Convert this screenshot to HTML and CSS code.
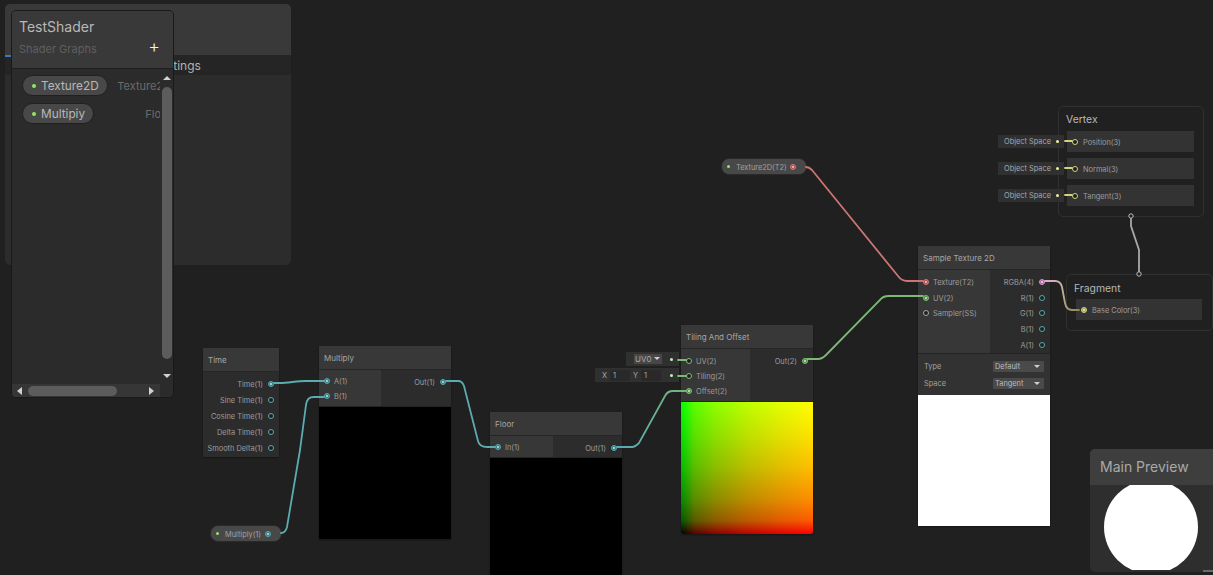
FILE: index.html
```html
<!DOCTYPE html>
<html lang="en">
<head>
<meta charset="utf-8">
<title>TestShader</title>
<link rel="stylesheet" href="styles.css">
</head>
<body>
<main class="canvas">

  <section class="inspector">
    <div class="inspector-head"></div>
    <div class="inspector-tabs"><span class="tab-marker"></span><span class="tab-label">Node Settings</span></div>
  </section>

  <section class="blackboard">
    <header class="bb-head">
      <h1 class="bb-title">TestShader</h1>
      <div class="bb-sub"><span>Shader Graphs</span><span class="bb-add">+</span></div>
    </header>
    <div class="bb-body">
      <div class="bb-list">
        <div class="bb-row"><span class="pill"><i class="dot"></i>Texture2D</span><span class="bb-type">Texture2D</span></div>
        <div class="bb-row"><span class="pill"><i class="dot"></i>Multipiy</span><span class="bb-type">Float</span></div>
      </div>
      <div class="vscroll">
        <span class="arrow-up"></span>
        <span class="vthumb"></span>
        <span class="arrow-down"></span>
      </div>
      <div class="hscroll">
        <span class="arrow-left"></span>
        <span class="hthumb"></span>
        <span class="arrow-right"></span>
      </div>
      <div class="corner"></div>
    </div>
  </section>

  <article class="node n-time">
    <header class="node-head">Time</header>
    <div class="out-only">
      <div class="port out"><span>Time(1)</span><i class="pin teal on"></i></div>
      <div class="port out"><span>Sine Time(1)</span><i class="pin teal"></i></div>
      <div class="port out"><span>Cosine Time(1)</span><i class="pin teal"></i></div>
      <div class="port out"><span>Delta Time(1)</span><i class="pin teal"></i></div>
      <div class="port out"><span>Smooth Delta(1)</span><i class="pin teal"></i></div>
    </div>
  </article>

  <article class="node n-multiply">
    <header class="node-head">Multiply</header>
    <div class="ports">
      <div class="inputs">
        <div class="port"><i class="pin teal on"></i><span>A(1)</span></div>
        <div class="port"><i class="pin teal on"></i><span>B(1)</span></div>
      </div>
      <div class="outputs">
        <div class="port out"><span>Out(1)</span><i class="pin teal on"></i></div>
      </div>
    </div>
    <div class="preview black"></div>
  </article>

  <article class="node n-floor">
    <header class="node-head">Floor</header>
    <div class="ports">
      <div class="inputs">
        <div class="port"><i class="pin teal on"></i><span>In(1)</span></div>
      </div>
      <div class="outputs">
        <div class="port out"><span>Out(1)</span><i class="pin teal on"></i></div>
      </div>
    </div>
    <div class="preview black"></div>
  </article>

  <article class="node n-tiling">
    <header class="node-head">Tiling And Offset</header>
    <div class="ports">
      <div class="inputs">
        <div class="port"><i class="pin green"></i><span>UV(2)</span></div>
        <div class="port"><i class="pin green"></i><span>Tiling(2)</span></div>
        <div class="port"><i class="pin green on"></i><span>Offset(2)</span></div>
      </div>
      <div class="outputs">
        <div class="port out"><span>Out(2)</span><i class="pin green on"></i></div>
      </div>
    </div>
    <div class="preview uv"></div>
  </article>

  <article class="node n-sample">
    <header class="node-head">Sample Texture 2D</header>
    <div class="ports">
      <div class="inputs">
        <div class="port"><i class="pin red on"></i><span>Texture(T2)</span></div>
        <div class="port"><i class="pin green on"></i><span>UV(2)</span></div>
        <div class="port"><i class="pin grey"></i><span>Sampler(SS)</span></div>
      </div>
      <div class="outputs">
        <div class="port out"><span>RGBA(4)</span><i class="pin pink on"></i></div>
        <div class="port out"><span>R(1)</span><i class="pin teal"></i></div>
        <div class="port out"><span>G(1)</span><i class="pin teal"></i></div>
        <div class="port out"><span>B(1)</span><i class="pin teal"></i></div>
        <div class="port out"><span>A(1)</span><i class="pin teal"></i></div>
      </div>
    </div>
    <div class="controls">
      <div class="control"><span>Type</span><span class="select">Default</span></div>
      <div class="control"><span>Space</span><span class="select">Tangent</span></div>
    </div>
    <div class="preview white"></div>
  </article>

  <article class="context n-vertex">
    <h2 class="context-title">Vertex</h2>
    <div class="block"><i class="pin yellow"></i><span>Position(3)</span></div>
    <div class="block"><i class="pin yellow"></i><span>Normal(3)</span></div>
    <div class="block"><i class="pin yellow"></i><span>Tangent(3)</span></div>
  </article>

  <article class="context n-fragment">
    <h2 class="context-title">Fragment</h2>
    <div class="block"><i class="pin yellow on"></i><span>Base Color(3)</span></div>
  </article>

  <div class="prop p-texture"><i class="prop-dot"></i><span>Texture2D(T2)</span><i class="pin red on"></i></div>
  <div class="prop p-multiply"><i class="prop-dot"></i><span>Multiply(1)</span><i class="pin teal on"></i></div>

  <div class="inline i-uv"><span class="dropdown">UV0</span><i class="inline-dot green-dot"></i></div>
  <div class="inline i-tiling">
    <span class="axis">X</span><span class="num">1</span><span class="axis">Y</span><span class="num">1</span><i class="inline-dot green-dot"></i>
  </div>
  <div class="inline i-space i-pos"><span>Object Space</span><i class="inline-dot yellow-dot"></i></div>
  <div class="inline i-space i-nor"><span>Object Space</span><i class="inline-dot yellow-dot"></i></div>
  <div class="inline i-space i-tan"><span>Object Space</span><i class="inline-dot yellow-dot"></i></div>

  <aside class="main-preview">
    <header class="mp-head">Main Preview</header>
    <div class="mp-body"><div class="sphere"></div></div>
    <span class="mp-grip"></span>
  </aside>

  <svg class="wires" width="1213" height="575" viewBox="0 0 1213 575" aria-hidden="true">
    <defs>
      <linearGradient id="wire-offset" gradientUnits="userSpaceOnUse" x1="617" y1="447" x2="686" y2="391">
        <stop offset="0" stop-color="#5aabb2"/><stop offset="1" stop-color="#74b47a"/>
      </linearGradient>
      <linearGradient id="wire-base" gradientUnits="userSpaceOnUse" x1="1045" y1="281" x2="1079" y2="310">
        <stop offset="0" stop-color="#dcaccd"/><stop offset="0.55" stop-color="#bcae88"/><stop offset="1" stop-color="#8d8c58"/>
      </linearGradient>
    </defs>
    <g fill="none" stroke-width="1.8" stroke-linecap="round">
      <path stroke="#5aabb2" d="M274 383H280C288 383 297 381 305 381H324"/>
      <path stroke="#5aabb2" d="M281 533C284 533 286 531 287 527L300 450L306 405C307 399 309 397 314 397H324"/>
      <path stroke="#5aabb2" d="M446 381H458C462 381 463 383 464 386L478 441C479 445 482 447 487 447H495"/>
      <path stroke="url(#wire-offset)" d="M617 447H632C635 447 637 445 639 443L665 396C667 392 669 391 673 391H686"/>
      <path stroke="#7cb975" d="M807 359H818C821 359 823 358 826 355L880 300C882 297 885 296 889 296H923"/>
      <path stroke="#cb7572" d="M806 167C808 167 810 168 812 170L898 276C901 280 903 281 907 281H923"/>
      <path stroke="#7cb975" d="M678 360H686M678 376H686"/>
      <path stroke="#cfd47f" d="M1065 141H1072M1065 168H1072M1065 195H1072"/>
      <path stroke="url(#wire-base)" d="M1045 281H1055C1059 281 1061 283 1062 287L1065 303C1066 308 1068 310 1072 310H1079"/>
      <path stroke="#a8a8a8" d="M1131 219V226L1139 250V272"/>
    </g>
    <g fill="#1f1f1f" stroke="#bcbcbc">
      <circle cx="1131" cy="216" r="2.2"/>
      <circle cx="1139" cy="274" r="2.2"/>
    </g>
  </svg>
</main>
</body>
</html>
```
FILE: styles.css
```css
* { box-sizing: border-box; }
html, body { margin: 0; height: 100%; }
body {
  background: #202020;
  font-family: Inter, "Noto Sans", sans-serif;
  overflow: hidden;
}
.canvas { position: relative; width: 1213px; height: 575px; overflow: hidden; }

/* Back inspector */
.inspector {
  position: absolute; left: 5px; top: 4px; width: 286px; height: 261px;
  background: #2c2c2c; border-radius: 5px; overflow: hidden;
}
.inspector-head { height: 51px; background: #393939; }
.inspector-tabs { position: relative; height: 20px; background: #252525; }
.tab-marker { position: absolute; left: 0; top: 0; width: 8px; height: 2px; background: #3a79bb; }
.tab-label { position: absolute; left: 116px; top: 3px; font-size: 12px; color: #b2b2b2; white-space: nowrap; }

/* Blackboard */
.blackboard {
  position: absolute; left: 11px; top: 10px; width: 163px; height: 388px;
  background: #2b2b2b; border: 1px solid #191919; border-radius: 5px; overflow: hidden;
  display: flex; flex-direction: column;
}
.bb-head { height: 58px; background: #393939; border-bottom: 1px solid #1e1e1e; padding: 7px 7px 0; flex: none; }
.bb-title { margin: 0; font-size: 14px; line-height: 18px; font-weight: 400; color: #b8b8b8; }
.bb-sub { display: flex; justify-content: space-between; align-items: center; margin-top: 6px; font-size: 11px; color: #5f5f5f; height: 14px; }
.bb-add { color: #f0f0f0; font-size: 18px; line-height: 14px; margin-right: 6px; font-weight: 300; margin-top: -4px; }
.bb-body { flex: 1; display: grid; grid-template-columns: 1fr 13px; grid-template-rows: 1fr 13px; min-height: 0; }
.bb-list { padding: 6px 0 0 10px; overflow: hidden; display: flex; flex-direction: column; gap: 7px; }
.bb-row { display: flex; justify-content: space-between; align-items: center; white-space: nowrap; height: 21px; width: 149px; }
.pill {
  display: flex; align-items: center; height: 21px; padding: 0 8px 0 9px;
  background: #484848; border: 1px solid #202020; border-radius: 11px;
  font-size: 11.8px; color: #b8b8b8;
}
.dot { width: 4px; height: 4px; border-radius: 50%; background: #8fe85e; margin-right: 5px; }
.bb-type { font-size: 11px; color: #6c6c6c; }
.vscroll { background: #2b2b2b; display: flex; flex-direction: column; align-items: center; padding: 7px 0 6px; }
.vthumb { width: 10px; height: 272px; margin-top: 7px; border-radius: 5px; background: #5c5c5c; }
.arrow-up { width: 0; height: 0; border: 4px solid transparent; border-top: 0; border-bottom: 4px solid #d2d2d2; }
.arrow-down { width: 0; height: 0; margin-top: auto; border: 4px solid transparent; border-bottom: 0; border-top: 4px solid #d2d2d2; }
.hscroll { background: #363636; display: flex; align-items: center; padding: 0 6px 0 5px; }
.hthumb { width: 89px; height: 10px; margin-left: 6px; border-radius: 5px; background: #5c5c5c; }
.arrow-left { width: 0; height: 0; border: 4px solid transparent; border-left: 0; border-right: 5px solid #d2d2d2; }
.arrow-right { width: 0; height: 0; margin-left: auto; border: 4px solid transparent; border-right: 0; border-left: 5px solid #d2d2d2; }
.corner { background: #2b2b2b; }

/* Graph nodes */
.node {
  position: absolute; background: #2c2c2c; color: #9c9c9c; font-size: 7.4px;
  display: flex; flex-direction: column; box-shadow: 0 1px 2px rgba(0,0,0,.35);
}
.n-time { left: 203px; top: 348px; width: 76px; height: 109px; }
.n-multiply { left: 319px; top: 346px; width: 132px; height: 193px; }
.n-floor { left: 490px; top: 412px; width: 132px; height: 170px; }
.n-tiling { left: 681px; top: 325px; width: 132px; height: 209px; }
.n-sample { left: 918px; top: 246px; width: 132px; height: 280px; }

.node-head {
  height: 24px; flex: none; background: #383838; border-bottom: 1px solid #262626;
  padding-left: 5px; font-size: 8px; line-height: 25px; color: #a6a6a6;
}
.ports { display: flex; flex: none; border-bottom: 1px solid #232323; }
.inputs { width: 62px; background: #373737; flex: none; padding: 4px 0 3px; display: flex; flex-direction: column; }
.outputs { flex: 1; background: #2c2c2c; padding-top: 4px; display: flex; flex-direction: column; }
.out-only { padding-top: 3.5px; display: flex; flex-direction: column; }
.out-only .port { height: 16.1px; }
.port { height: 15.7px; display: flex; align-items: center; gap: 4px; padding-left: 5px; white-space: nowrap; }
.port span { padding-top: 1px; }
.port.out { justify-content: flex-end; gap: 5px; padding: 0 5px 0 0; }
.pin {
  flex: none; width: 6px; height: 6px; border-radius: 50%; background: #1f1f1f; border: 1px solid #888;
  position: relative; display: block;
}
.pin.on::after { content: ""; position: absolute; left: 1px; top: 1px; width: 2px; height: 2px; background: currentColor; border-radius: 50%; }
.teal { border-color: #55a8af; color: #bdeaee; }
.teal.on { background: #3a7a80; }
.green { border-color: #80bf76; color: #cdf0c5; }
.green.on { background: #508a49; }
.red { border-color: #d67876; color: #f7c8c8; }
.red.on { background: #a85250; }
.pink { border-color: #d294cb; color: #f4d4f0; }
.pink.on { background: #a86fa0; }
.yellow { border-color: #cfd47e; color: #f2f3bc; }
.yellow.on { background: #9c9f55; }
.grey { border-color: #a8a8a8; }

.preview { flex: 1; min-height: 0; }
.black { background: #000; }
.white { background: #fff; }
.uv {
  background:
    linear-gradient(to right, #000, rgb(89,0,0) 10%, rgb(137,0,0) 25%, rgb(188,0,0) 50%, rgb(225,0,0) 75%, #f00),
    linear-gradient(to top, #000, rgb(0,89,0) 10%, rgb(0,137,0) 25%, rgb(0,188,0) 50%, rgb(0,225,0) 75%, #0f0);
  background-blend-mode: screen;
  border-radius: 0 0 3px 3px;
}

.n-multiply .ports { height: 37px; }
.n-floor .ports { height: 22px; }
.n-floor .inputs { width: 63px; }
.n-tiling .ports { height: 53px; }
.n-tiling .inputs { width: 69px; }
.n-sample .ports { height: 84px; }
.n-sample .inputs { width: 72px; }

.controls { height: 41px; flex: none; background: #323232; padding: 6px 6px 0 6px; display: flex; flex-direction: column; gap: 5px; }
.control { display: flex; justify-content: space-between; align-items: center; height: 12px; color: #a2a2a2; }
.select {
  width: 51px; height: 11px; background: #4a4a4a; border-radius: 1px; padding-left: 2px; line-height: 11px; color: #bcbcbc; position: relative;
}
.select::after {
  content: ""; position: absolute; right: 4px; top: 4px; border: 3px solid transparent; border-bottom: 0; border-top: 3px solid #d0d0d0;
}

/* Contexts */
.context {
  position: absolute; background: #202020; border: 1px solid #303030; border-radius: 5px;
  display: flex; flex-direction: column; color: #9e9e9e; font-size: 7.4px;
}
.n-vertex { left: 1058px; top: 106px; width: 146px; height: 111px; padding: 6px 9px 0 8px; gap: 6px; }
.n-fragment { left: 1066px; top: 274px; width: 147px; height: 57px; padding: 7px 10px 0 9px; gap: 6px; }
.context-title { margin: 0 0 -1px -1px; font-size: 10.4px; line-height: 13px; font-weight: 400; color: #b8b8b8; }
.n-fragment .context-title { margin: 0 0 -2px -2px; }
.block { height: 21px; background: #333; display: flex; align-items: center; gap: 5px; padding-left: 5px; flex: none; }
.block span { padding-top: 1px; }

/* Property nodes */
.prop {
  position: absolute; height: 17px; background: #484848; border-radius: 8px; border: 1px solid #2a2a2a;
  display: flex; align-items: center; font-size: 7.4px; color: #a0a0a0; padding: 0 10px 0 5px; white-space: nowrap;
}
.p-texture { left: 721px; top: 158px; width: 86px; }
.p-multiply { left: 210px; top: 525px; width: 72px; }
.prop span { flex: 1; padding-top: 1px; }
.prop-dot { width: 3px; height: 3px; background: #8fe85e; border-radius: 50%; margin-right: 6px; flex: none; }

/* Inline port controls */
.inline {
  position: absolute; background: #303030; display: flex; align-items: center; height: 14px;
  font-size: 7.4px; color: #a8a8a8; white-space: nowrap;
}
.inline-dot { width: 3px; height: 3px; border-radius: 50%; margin-left: auto; flex: none; }
.green-dot { background: #bdf5b0; }
.yellow-dot { background: #eef09a; }
.i-uv { left: 626px; top: 352px; width: 53px; padding: 0 6px 0 8px; }
.dropdown { width: 28px; height: 10px; line-height: 10px; background: #474747; padding-left: 1px; position: relative; font-size: 8px; }
.dropdown::after { content: ""; position: absolute; right: 2px; top: 3px; border: 3px solid transparent; border-bottom: 0; border-top: 3px solid #cfcfcf; }
.i-tiling { left: 595px; top: 368px; width: 84px; padding: 0 6px 0 4px; }
.axis { width: 11px; flex: none; text-align: center; }
.num { width: 20px; height: 11px; line-height: 11px; background: #292929; padding-left: 3px; border-radius: 2px; flex: none; }
.i-space { left: 998px; width: 66px; height: 13px; padding: 0 5px 0 6px; }
.i-pos { top: 135px; }
.i-nor { top: 162px; }
.i-tan { top: 189px; }

/* Main preview */
.main-preview {
  position: absolute; left: 1090px; top: 449px; width: 128px; height: 123px;
  background: #2e2e2e; border-radius: 5px; overflow: hidden; display: flex; flex-direction: column;
}
.mp-head { height: 36px; flex: none; background: #3e3e3e; padding-left: 10px; font-size: 14px; line-height: 35px; color: #a9a9a9; }
.mp-body { height: 85px; overflow: hidden; position: relative; }
.sphere { position: absolute; left: 14px; top: -5px; width: 94px; height: 94px; border-radius: 50%; background: #fff; }
.mp-grip { position: absolute; left: 113px; bottom: 0; width: 10px; height: 2px; background: #6a6a6a; }

.wires { position: absolute; left: 0; top: 0; pointer-events: none; }
```
